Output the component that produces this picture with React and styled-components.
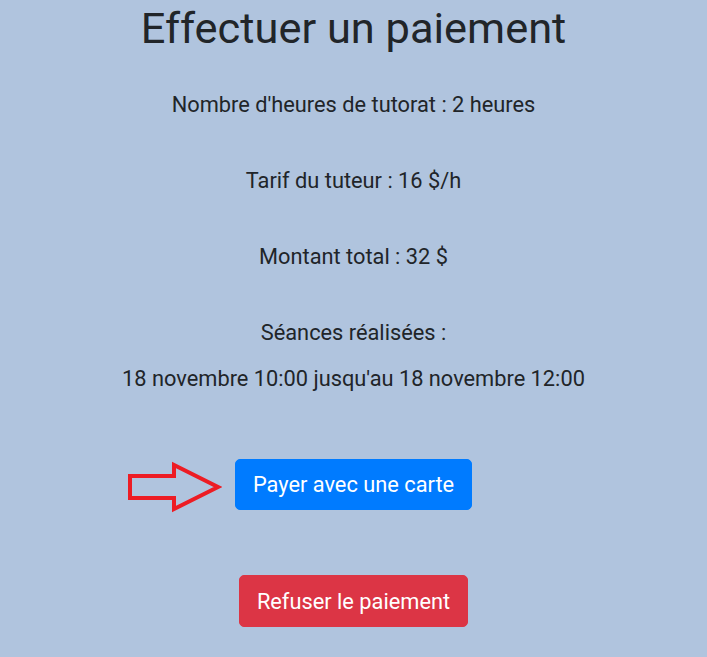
import React from "react";
import styled, { createGlobalStyle } from "styled-components";

const GlobalStyle = createGlobalStyle`
  html, body {
    margin: 0;
    padding: 0;
    background: #b0c4de;
  }
  body {
    font-family: Roboto, "Liberation Sans", Arial, sans-serif;
    color: #212529;
    min-height: 100vh;
  }
`;

const Page = styled.main`
  display: flex;
  flex-direction: column;
  align-items: center;
  text-align: center;
  padding-top: 2px;
`;

const Title = styled.h1`
  margin: 0 0 33px;
  font-size: 43.4px;
  font-weight: 400;
  line-height: 53px;
`;

const Info = styled.p`
  margin: 0 0 ${(p) => (p.$tight ? "13px" : "43px")};
  font-size: 21.8px;
  line-height: 33px;
`;

const Actions = styled.div`
  display: flex;
  flex-direction: column;
  align-items: center;
  gap: 65px;
  margin-top: 21px;
`;

const ButtonWrap = styled.div`
  position: relative;
`;

const Button = styled.button`
  font-family: inherit;
  font-size: 21.8px;
  line-height: 33px;
  padding: 8px 17px;
  border: 1px solid ${(p) => p.$bg};
  border-radius: 5px;
  background: ${(p) => p.$bg};
  color: #fff;
  cursor: pointer;
  min-height: ${(p) => p.$h}px;
`;

const Arrow = styled.svg`
  position: absolute;
  right: calc(100% + 13px);
  top: 2px;
  width: 96px;
  height: 52px;
`;

export default function App() {
  return (
    <>
      <GlobalStyle />
      <Page>
        <Title>Effectuer un paiement</Title>
        <Info>Nombre d'heures de tutorat : 2 heures</Info>
        <Info>Tarif du tuteur : 16 $/h</Info>
        <Info>Montant total : 32 $</Info>
        <Info $tight>Séances réalisées :</Info>
        <Info>18 novembre 10:00 jusqu'au 18 novembre 12:00</Info>
        <Actions>
          <ButtonWrap>
            <Arrow viewBox="0 0 96 52">
              <polygon
                points="4,15 48,15 48,4 92,26 48,48 48,37 4,37"
                fill="none"
                stroke="#ed1c24"
                strokeWidth="4"
                strokeLinejoin="miter"
              />
            </Arrow>
            <Button $bg="#007bff" $h={51}>Payer avec une carte</Button>
          </ButtonWrap>
          <Button $bg="#dc3545" $h={52}>Refuser le paiement</Button>
        </Actions>
      </Page>
    </>
  );
}
